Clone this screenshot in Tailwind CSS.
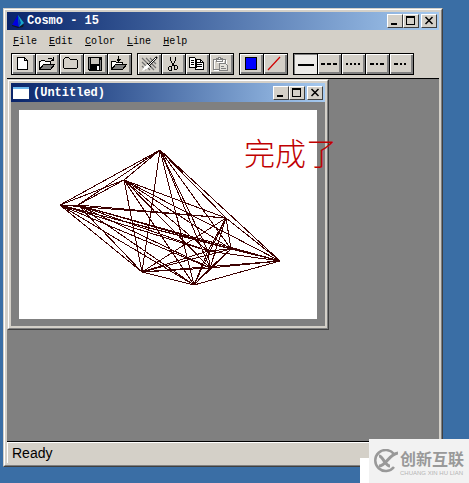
<!DOCTYPE html>
<html lang="en">
<head>
    <meta charset="UTF-8">
    <meta name="viewport" content="width=device-width, initial-scale=1.0">
    <title>Cosmo - 15</title>
    <script src="https://cdn.jsdelivr.net/npm/@tailwindcss/browser@4"></script>
</head>
<body class="relative h-screen overflow-hidden bg-[#3a6ea5] pt-2 pb-4 pl-[3px] pr-[26px] font-['Liberation_Mono','Noto_Sans_CJK_SC',monospace] text-black">
    <!-- Main window -->
    <div class="flex h-full flex-col border border-t-[#d4d0c8] border-l-[#d4d0c8] border-r-[#404040] border-b-[#404040]">
        <div class="flex min-h-0 flex-1 flex-col border border-t-white border-l-white border-r-[#808080] border-b-[#808080] bg-[#d4d0c8] p-0.5">
            <header class="flex h-[18px] shrink-0 items-center bg-linear-to-r from-[#0a246a] to-[#a6caf0] pr-0.5 pl-1">
                <svg class="h-4 w-4" viewBox="0 0 16 16">
                    <path d="M7 2L1 12l7 2z" fill="#0000e0"/>
                    <path d="M7 2l1 12 5-4z" fill="#18a8c8"/>
                    <path d="M7 2l3 8-2 4z" fill="#0040b0"/>
                    <path d="M1 12l7 2 5-3-1 3-5 1-6-2z" fill="#101820"/>
                </svg>
                <h1 class="flex-1 text-xs font-bold text-white">Cosmo - 15</h1>
                <div class="flex">
                    <button aria-label="Minimize" class="h-3.5 w-4 border border-t-white border-l-white border-r-[#404040] border-b-[#404040] bg-[#d4d0c8]"><svg class="block h-3 w-3.5" viewBox="0 0 14 12" shape-rendering="crispEdges"><path d="M3 8h6v2H3z"/></svg></button>
                    <button aria-label="Maximize" class="h-3.5 w-4 border border-t-white border-l-white border-r-[#404040] border-b-[#404040] bg-[#d4d0c8]"><svg class="block h-3 w-3.5" viewBox="0 0 14 12" shape-rendering="crispEdges"><path d="M2 1h9v9H2zM3 3v6h7V3z" fill-rule="evenodd"/></svg></button>
                    <button aria-label="Close" class="ml-0.5 h-3.5 w-4 border border-t-white border-l-white border-r-[#404040] border-b-[#404040] bg-[#d4d0c8]"><svg class="block h-3 w-3.5" viewBox="0 0 14 12"><path d="M3.5 2l7 7M10.5 2l-7 7" stroke="#000" stroke-width="1.5"/></svg></button>
                </div>
            </header>

            <nav class="flex h-[23px] shrink-0 items-center gap-3 pl-1.5 text-[10px]">
                <a href="#"><u>F</u>ile</a>
                <a href="#"><u>E</u>dit</a>
                <a href="#"><u>C</u>olor</a>
                <a href="#"><u>L</u>ine</a>
                <a href="#"><u>H</u>elp</a>
            </nav>

            <!-- Toolbar, buttons share their black outlines -->
            <div class="flex h-[25px] shrink-0 gap-[5px] pl-1">
                <div class="flex -space-x-px">
                    <button aria-label="New" class="h-[22px] w-[25px] border border-black bg-[#d4d0c8] shadow-[inset_1px_1px_#fff,inset_-2px_-2px_#808080]"><svg class="block h-5 w-[23px]" viewBox="0 0 23 20" shape-rendering="crispEdges"><path d="M5.5 3.500h7l3 3v9h-10zM12.500 3.500v3h3" fill="#fff" stroke="#000"/></svg></button>
                    <button aria-label="Open" class="h-[22px] w-[25px] border border-black bg-[#d4d0c8] shadow-[inset_1px_1px_#fff,inset_-2px_-2px_#808080]"><svg class="block h-5 w-[23px]" viewBox="0 0 23 20" shape-rendering="crispEdges"><path d="M3.5 15.500V7.500h1l1-1h3l1 1h5v3" fill="#fff" stroke="#000"/><path d="M3.500 15.500l4-5h11l-4 5z" fill="#808080" stroke="#000"/><path d="M11.500 5.500l1-1h3l2 2M17.500 3v4M14.500 6.500h3" fill="none" stroke="#000"/></svg></button>
                    <button aria-label="Close file" class="h-[22px] w-[25px] border border-black bg-[#d4d0c8] shadow-[inset_1px_1px_#fff,inset_-2px_-2px_#808080]"><svg class="block h-5 w-[23px]" viewBox="0 0 23 20" shape-rendering="crispEdges"><path d="M3.500 13.500v-8l2-2h3l2 2h6l1 1v7l-1 1h-12z" fill="none" stroke="#000"/></svg></button>
                    <button aria-label="Save" class="h-[22px] w-[25px] border border-black bg-[#d4d0c8] shadow-[inset_1px_1px_#fff,inset_-2px_-2px_#808080]"><svg class="block h-5 w-[23px]" viewBox="0 0 23 20" shape-rendering="crispEdges"><path d="M4 3h14v14H5l-1-1z"/><path d="M5 4h1v11H5zM16 6h1v10h-1z" fill="#808080"/><path d="M7 4h8v6H7z" fill="#c8c4bc"/><path d="M13 12h2v4h-2z" fill="#fff"/></svg></button>
                    <button aria-label="Import" class="h-[22px] w-[25px] border border-black bg-[#d4d0c8] shadow-[inset_1px_1px_#fff,inset_-2px_-2px_#808080]"><svg class="block h-5 w-[23px]" viewBox="0 0 23 20" shape-rendering="crispEdges"><path d="M3.500 15.500v-8h4l1 1h6v2" fill="#fff" stroke="#000"/><path d="M3.500 15.500l4-5h11l-4 5z" fill="#808080" stroke="#000"/><path d="M10.500 2v6M8.500 5.500h4M9 6.500h3" fill="none" stroke="#000"/></svg></button>
                </div>
                <div class="flex -space-x-px">
                    <button aria-label="Clear" class="h-[22px] w-[25px] border border-black bg-[#d4d0c8] shadow-[inset_1px_1px_#fff,inset_-2px_-2px_#808080]"><svg class="block h-5 w-[23px]" viewBox="0 0 23 20"><path d="M4 4l12 12M8 4l10 10M12 4l6 6M4 8l8 8M4 12l4 4" stroke="#707070" stroke-width="1.200"/><path d="M19 3l-8 8" stroke="#000" stroke-width="2"/><path d="M18 4l-7 7" stroke="#fff"/><path d="M10 10l2 2-3 3-5 2 2-4z" fill="#fff"/><path d="M9 9l4 4" stroke="#000"/></svg></button>
                    <button aria-label="Cut" class="h-[22px] w-[25px] border border-black bg-[#d4d0c8] shadow-[inset_1px_1px_#fff,inset_-2px_-2px_#808080]"><svg class="block h-5 w-[23px]" viewBox="0 0 23 20" shape-rendering="crispEdges"><path d="M8.500 3v3l1 2 3 5M13.500 3v3l-1 2-3 5" fill="none" stroke="#000"/><path d="M7.500 12.500h2v4h-2l-1-1v-2zM12.500 11.500h2l1 1v2l-1 1h-2z" fill="none" stroke="#000"/></svg></button>
                    <button aria-label="Copy" class="h-[22px] w-[25px] border border-black bg-[#d4d0c8] shadow-[inset_1px_1px_#fff,inset_-2px_-2px_#808080]"><svg class="block h-5 w-[23px]" viewBox="0 0 23 20" shape-rendering="crispEdges"><path d="M3.500 3.500h5l2 2v8h-7zM9.500 5.500h5l3 3v7h-8z" fill="#fff" stroke="#000"/><path d="M5 6.500h3M5 8.500h3M5 10.500h3M11 8.500h3M11 10.500h5M11 12.500h5M14.500 6v2.500h3" fill="none" stroke="#000"/></svg></button>
                    <button aria-label="Paste" class="h-[22px] w-[25px] border border-black bg-[#d4d0c8] shadow-[inset_1px_1px_#fff,inset_-2px_-2px_#808080]"><svg class="block h-5 w-[23px]" viewBox="0 0 23 20" shape-rendering="crispEdges"><path d="M4.500 6.500h12v10h-12zM7.500 8.500v-3h2v-1h2v1h2v3z" fill="none" stroke="#fff"/><path d="M3.500 5.500h12v10h-12zM6.500 7.500v-3h2v-1h2v1h2v3z" fill="none" stroke="#808080"/><path d="M9.500 9.500h6l2 2v5h-8z" fill="#e4e2dc" stroke="#808080"/><path d="M11 12.500h3M11 14.500h5" stroke="#808080"/></svg></button>
                </div>
                <div class="flex -space-x-px">
                    <button aria-label="Fill color" class="h-[22px] w-[25px] border border-black bg-[#d4d0c8] shadow-[inset_1px_1px_#fff,inset_-2px_-2px_#808080]"><svg class="block h-5 w-[23px]" viewBox="0 0 23 20" shape-rendering="crispEdges"><path d="M5.500 3.500h11v12h-11z" fill="#00f" stroke="#000"/></svg></button>
                    <button aria-label="Line color" class="h-[22px] w-[25px] border border-black bg-[#d4d0c8] shadow-[inset_1px_1px_#fff,inset_-2px_-2px_#808080]"><svg class="block h-5 w-[23px]" viewBox="0 0 23 20"><path d="M4 16L16 3" stroke="#d00000" stroke-width="1.200"/></svg></button>
                </div>
                <div class="flex -space-x-px">
                    <button aria-label="Solid line" aria-pressed="true" class="h-[22px] w-[25px] border border-black bg-[#edebe8] shadow-[inset_1px_1px_#808080]"><svg class="block h-5 w-[23px]" viewBox="0 0 23 20" shape-rendering="crispEdges"><path d="M4 11h16" stroke="#000" stroke-width="2"/></svg></button>
                    <button aria-label="Dashed line" class="h-[22px] w-[25px] border border-black bg-[#d4d0c8] shadow-[inset_1px_1px_#fff,inset_-2px_-2px_#808080]"><svg class="block h-5 w-[23px]" viewBox="0 0 23 20" shape-rendering="crispEdges"><path d="M3 10h16" stroke="#000" stroke-width="2" stroke-dasharray="4 2"/></svg></button>
                    <button aria-label="Dotted line" class="h-[22px] w-[25px] border border-black bg-[#d4d0c8] shadow-[inset_1px_1px_#fff,inset_-2px_-2px_#808080]"><svg class="block h-5 w-[23px]" viewBox="0 0 23 20" shape-rendering="crispEdges"><path d="M4 10h14" stroke="#000" stroke-width="2" stroke-dasharray="2 2"/></svg></button>
                    <button aria-label="Dash dot line" class="h-[22px] w-[25px] border border-black bg-[#d4d0c8] shadow-[inset_1px_1px_#fff,inset_-2px_-2px_#808080]"><svg class="block h-5 w-[23px]" viewBox="0 0 23 20" shape-rendering="crispEdges"><path d="M4 10h14" stroke="#000" stroke-width="2" stroke-dasharray="4 2 2 2"/></svg></button>
                    <button aria-label="Dash dot dot line" class="h-[22px] w-[25px] border border-black bg-[#d4d0c8] shadow-[inset_1px_1px_#fff,inset_-2px_-2px_#808080]"><svg class="block h-5 w-[23px]" viewBox="0 0 23 20" shape-rendering="crispEdges"><path d="M4 10h12" stroke="#000" stroke-width="2" stroke-dasharray="4 2 2 2 2 2"/></svg></button>
                </div>
            </div>

            <!-- Document area -->
            <main class="relative min-h-0 flex-1 border-y border-black bg-[#808080]">
                <section class="absolute top-0 left-0 w-[322px] border border-t-[#d4d0c8] border-l-[#d4d0c8] border-r-[#404040] border-b-[#404040]">
                    <div class="border border-t-white border-l-white border-r-[#808080] border-b-[#808080] bg-[#d4d0c8] p-0.5">
                        <header class="flex h-[19px] items-center gap-1 bg-linear-to-r from-[#0a246a] to-[#a6caf0] pr-0.5 pl-0.5">
                            <svg class="h-4 w-4" viewBox="0 0 16 16" shape-rendering="crispEdges"><path d="M0 2h16v12H0z" fill="#fff"/><path d="M0 2h16v2H0z" fill="#6cb8f0"/></svg>
                            <h2 class="flex-1 text-xs font-bold text-white">(Untitled)</h2>
                            <div class="flex">
                                <button aria-label="Minimize document" class="h-3.5 w-4 border border-t-white border-l-white border-r-[#404040] border-b-[#404040] bg-[#d4d0c8]"><svg class="block h-3 w-3.5" viewBox="0 0 14 12" shape-rendering="crispEdges"><path d="M3 8h6v2H3z"/></svg></button>
                                <button aria-label="Maximize document" class="h-3.5 w-4 border border-t-white border-l-white border-r-[#404040] border-b-[#404040] bg-[#d4d0c8]"><svg class="block h-3 w-3.5" viewBox="0 0 14 12" shape-rendering="crispEdges"><path d="M2 1h9v9H2zM3 3v6h7V3z" fill-rule="evenodd"/></svg></button>
                                <button aria-label="Close document" class="ml-0.5 h-3.5 w-4 border border-t-white border-l-white border-r-[#404040] border-b-[#404040] bg-[#d4d0c8]"><svg class="block h-3 w-3.5" viewBox="0 0 14 12"><path d="M3.5 2l7 7M10.5 2l-7 7" stroke="#000" stroke-width="1.5"/></svg></button>
                            </div>
                        </header>
                        <div class="bg-[#808080] px-2 pt-2 pb-[7px]">
                            <svg class="block h-[209px] w-[298px] bg-white" viewBox="0 0 298 209" shape-rendering="crispEdges">
                                <path id="mesh" fill="none" stroke="#3c0000"/>
                            </svg>
                        </div>
                    </div>
                </section>
                <p class="absolute top-[50px] left-[237px] font-['Noto_Sans_CJK_SC',sans-serif] text-[31px] leading-[46px] font-light whitespace-nowrap text-[#c00000]">完成了</p>
            </main>

            <footer class="flex h-[21px] shrink-0 items-center border-t border-l border-white pl-1 font-['Liberation_Sans',sans-serif] text-sm">Ready</footer>
        </div>
    </div>

    <!-- Watermark -->
    <div class="absolute right-0 bottom-0 flex items-end">
        <div class="h-[25px] w-[9px] bg-white"></div>
        <div class="flex h-11 w-[100px] items-center gap-0.5 bg-[#f2f2f2] pl-[3px] text-[#999]">
            <svg class="h-6 w-[26px] shrink-0" viewBox="0 0 26 24" fill="none" stroke="currentColor">
                <path d="M22 5A10.500 10.500 0 1 0 22 18" stroke-width="2.500"/>
                <path d="M7 7c4 0 6 10 11 10" stroke-width="3"/>
                <path d="M26 4c-9 1-12 13-19 13" stroke-width="3"/>
            </svg>
            <div class="font-['Noto_Sans_CJK_SC',sans-serif] whitespace-nowrap">
                <div class="text-base leading-6 font-bold">创新互联</div>
                <div class="font-['Liberation_Sans',sans-serif] text-[6px] leading-[6px] text-[#b4b4b4]">CHUANG XIN HU LIAN</div>
            </div>
        </div>
    </div>

    <script>
        // Every point is joined to every other point
        const points = [
            [141, 40], [105, 70], [41, 95], [59, 95], [207, 108], [212, 139],
            [261, 151], [123, 162], [175, 175], [191, 158], [189, 141]
        ];
        let d = '';
        points.forEach((a, i) => {
            points.slice(i + 1).forEach(b => {
                d += `M${a[0]} ${a[1]}L${b[0]} ${b[1]}`;
            });
        });
        document.getElementById('mesh').setAttribute('d', d);
    </script>
</body>
</html>
